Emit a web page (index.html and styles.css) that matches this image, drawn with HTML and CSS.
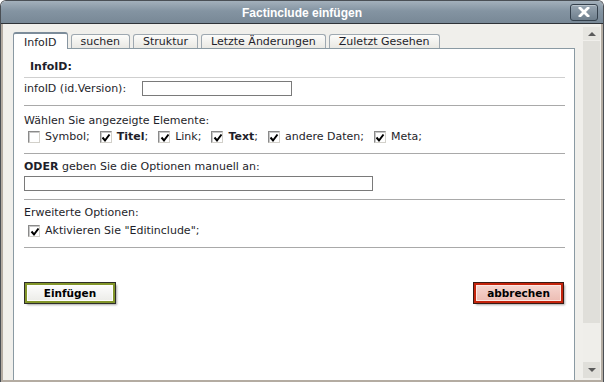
FILE: index.html
```html
<!DOCTYPE html>
<html lang="de">
<head>
  <meta charset="UTF-8" />
  <title>Factinclude einfügen</title>
  <link rel="stylesheet" href="styles.css">
</head>
<body>
  <div class="window">
    <div class="titlebar">
      <span></span>
      <span class="title">Factinclude einfügen</span>
      <span class="close">
        <svg width="12" height="10" viewBox="0 0 12 10"><path d="M2 1 L10 9 M10 1 L2 9" stroke="#fff" stroke-width="2.8" stroke-linecap="square"/></svg>
      </span>
    </div>

    <div class="frame">
      <div class="page">
        <!-- tabs -->
        <ul class="tabs">
          <li class="tab active">InfoID</li>
          <li class="tab">suchen</li>
          <li class="tab">Struktur</li>
          <li class="tab">Letzte Änderungen</li>
          <li class="tab">Zuletzt Gesehen</li>
        </ul>

        <div class="panel">
          <div class="section s-head">
            <b>InfoID:</b>
          </div>

          <div class="section s-id">
            <label>infoID (id.Version):</label>
            <input type="text" class="field short">
          </div>

          <div class="section s-elements">
            <div class="line">Wählen Sie angezeigte Elemente:</div>
            <div class="checks">
              <span class="check"><span class="box"></span>Symbol;</span>
              <span class="check"><span class="box on"></span><b>Titel</b>;</span>
              <span class="check"><span class="box on"></span>Link;</span>
              <span class="check"><span class="box on"></span><b>Text</b>;</span>
              <span class="check"><span class="box on"></span>andere Daten;</span>
              <span class="check"><span class="box on"></span>Meta;</span>
            </div>
          </div>

          <div class="section s-manual">
            <div class="line"><b>ODER</b> geben Sie die Optionen manuell an:</div>
            <input type="text" class="field long">
          </div>

          <div class="section s-extended">
            <div class="line">Erweiterte Optionen:</div>
            <div class="checks">
              <span class="check"><span class="box on"></span>Aktivieren Sie "Editinclude";</span>
            </div>
          </div>

          <div class="buttons">
            <span class="btn ok">Einfügen</span>
            <span class="btn cancel">abbrechen</span>
          </div>
        </div>
      </div>

      <div class="scrollbar">
        <div class="sb-btn up"><span class="arrow-up"></span></div>
        <div class="sb-thumb"></div>
        <div class="sb-track"></div>
        <div class="sb-btn down"><span class="arrow-down"></span></div>
      </div>
    </div>
  </div>
</body>
</html>
```

FILE: styles.css
```css
* {
  margin: 0;
  padding: 0;
  box-sizing: border-box;
}
body {
  background: #fff;
  font-family: "DejaVu Sans", Verdana, sans-serif;
  font-size: 11px;
  color: #1e1e2a;
}
.window {
  width: 604px;
  border: 1px solid #4a4f55;
  border-bottom: none;
  border-radius: 6px 6px 0 0;
  overflow: hidden;
}
.titlebar {
  height: 23px;
  display: grid;
  grid-template-columns: 1fr auto 1fr;
  align-items: center;
  background: linear-gradient(#a3b0bb, #8494a2 45%, #788896);
  border-bottom: 1px solid #2f3338;
}
.title {
  font-family: "Liberation Sans", Arial, sans-serif;
  font-weight: bold;
  font-size: 12px;
  color: #fff;
  padding-top: 1px;
}
.close {
  justify-self: end;
  margin-right: 5px;
  width: 28px;
  height: 17px;
  display: flex;
  align-items: center;
  justify-content: center;
  border: 1px solid #34404c;
  border-radius: 3px;
  background: linear-gradient(#98a6b2, #6e7e8c);
  box-shadow: inset 0 1px 0 rgba(255,255,255,0.35);
}
.frame {
  height: 358px;
  display: flex;
  background: #f0efeb;
  border: 2px solid #b4aca2;
  border-top: none;
  padding-left: 10px;
}
.page {
  width: 562px;
  padding-top: 8px;
  display: flex;
  flex-direction: column;
}
.tabs {
  list-style: none;
  display: flex;
  align-items: flex-end;
  gap: 3px;
  height: 16px;
}
.tab {
  height: 14px;
  padding: 0 9px;
  line-height: 13px;
  border: 1px solid #9ea8b0;
  border-bottom: none;
  border-radius: 3px 3px 0 0;
  background: linear-gradient(#fcfcfa, #e9e8e3);
}
.tab.active {
  height: 17px;
  margin-bottom: -1px;
  padding: 0 10px;
  line-height: 17px;
  background: #fff;
  border-color: #8795a1;
  border-top: 2px solid #7c8c9a;
  position: relative;
  z-index: 1;
}
.panel {
  flex: 1;
  background: #fff;
  border: 1px solid #8a9aa3;
  border-bottom: none;
  padding: 0 9px 0 10px;
  overflow: hidden;
}
.section {
  border-bottom: 1px solid #a9a9a9;
}
.s-head {
  padding: 11px 0 3px 6px;
  line-height: 14px;
  border-bottom-color: #cfcfcf;
}
.s-id {
  display: flex;
  align-items: center;
  padding: 3px 0 9px;
}
.s-id label {
  width: 118px;
}
.field {
  height: 15px;
  border: 1px solid #7a7a7a;
  background: #fff;
  display: block;
}
.field.short {
  width: 150px;
}
.field.long {
  width: 349px;
  margin-top: 2px;
}
.line {
  line-height: 14px;
}
.s-elements {
  padding: 8px 0 9px;
}
.s-elements .checks {
  margin-top: 2px;
}
.s-manual {
  padding: 6px 0 8px;
}
.s-extended {
  padding: 6px 0 9px;
}
.s-extended .checks {
  margin-top: 4px;
}
.checks {
  display: flex;
  gap: 10px;
  padding-left: 4px;
  line-height: 14px;
}
.check {
  display: flex;
  align-items: center;
}
.box {
  width: 12px;
  height: 12px;
  margin-right: 5px;
  border: 1px solid #8a8a8a;
  border-right-color: #d2d0ca;
  border-bottom-color: #d2d0ca;
  background: #fff;
  box-shadow: inset 1px 1px 0 #c8c8c8;
}
.box.on {
  background: #fff url("data:image/svg+xml,%3Csvg xmlns='http://www.w3.org/2000/svg' width='10' height='10'%3E%3Cpath d='M1.5 4.5 L4 7.5 L8.5 1.5' stroke='%23000' stroke-width='2' fill='none'/%3E%3C/svg%3E") no-repeat 0.5px 0.5px;
}
.buttons {
  display: flex;
  justify-content: space-between;
  padding: 35px 2px 0 1px;
}
.btn {
  height: 20px;
  display: flex;
  align-items: center;
  justify-content: center;
  font-weight: bold;
  font-size: 10.5px;
  color: #000;
  border: 2px solid;
}
.btn.ok {
  width: 90px;
  border-color: #83962a;
  background: linear-gradient(#fdfdfd, #ecece8);
  box-shadow: 0 0 0 1px #2e2e28, 2px 2px 2px rgba(0,0,0,0.35), inset 0 0 0 1px #fff;
}
.btn.cancel {
  width: 89px;
  border-color: #c4240c;
  background: linear-gradient(#f6d6d0, #ecbcb3);
  box-shadow: 0 0 0 1px #3a1a14, 2px 2px 2px rgba(0,0,0,0.35), inset 0 0 0 1px #fbe8e4;
}
.scrollbar {
  width: 26px;
  padding: 3px 1px 2px 8px;
  display: flex;
  flex-direction: column;
}
.sb-btn {
  display: flex;
  align-items: center;
  justify-content: center;
  background: #e6e5e0;
}
.sb-btn.up {
  height: 13px;
}
.sb-btn.down {
  height: 16px;
  background: #e0dfda;
}
.sb-thumb {
  height: 282px;
  margin-top: 1px;
  background: #e0dfda;
}
.sb-track {
  flex: 1;
  background: #efeeea;
}
.arrow-up {
  border: 4px solid transparent;
  border-top: none;
  border-bottom: 4px solid #5a5a5a;
}
.arrow-down {
  border: 4px solid transparent;
  border-bottom: none;
  border-top: 4px solid #5a5a5a;
}
```
